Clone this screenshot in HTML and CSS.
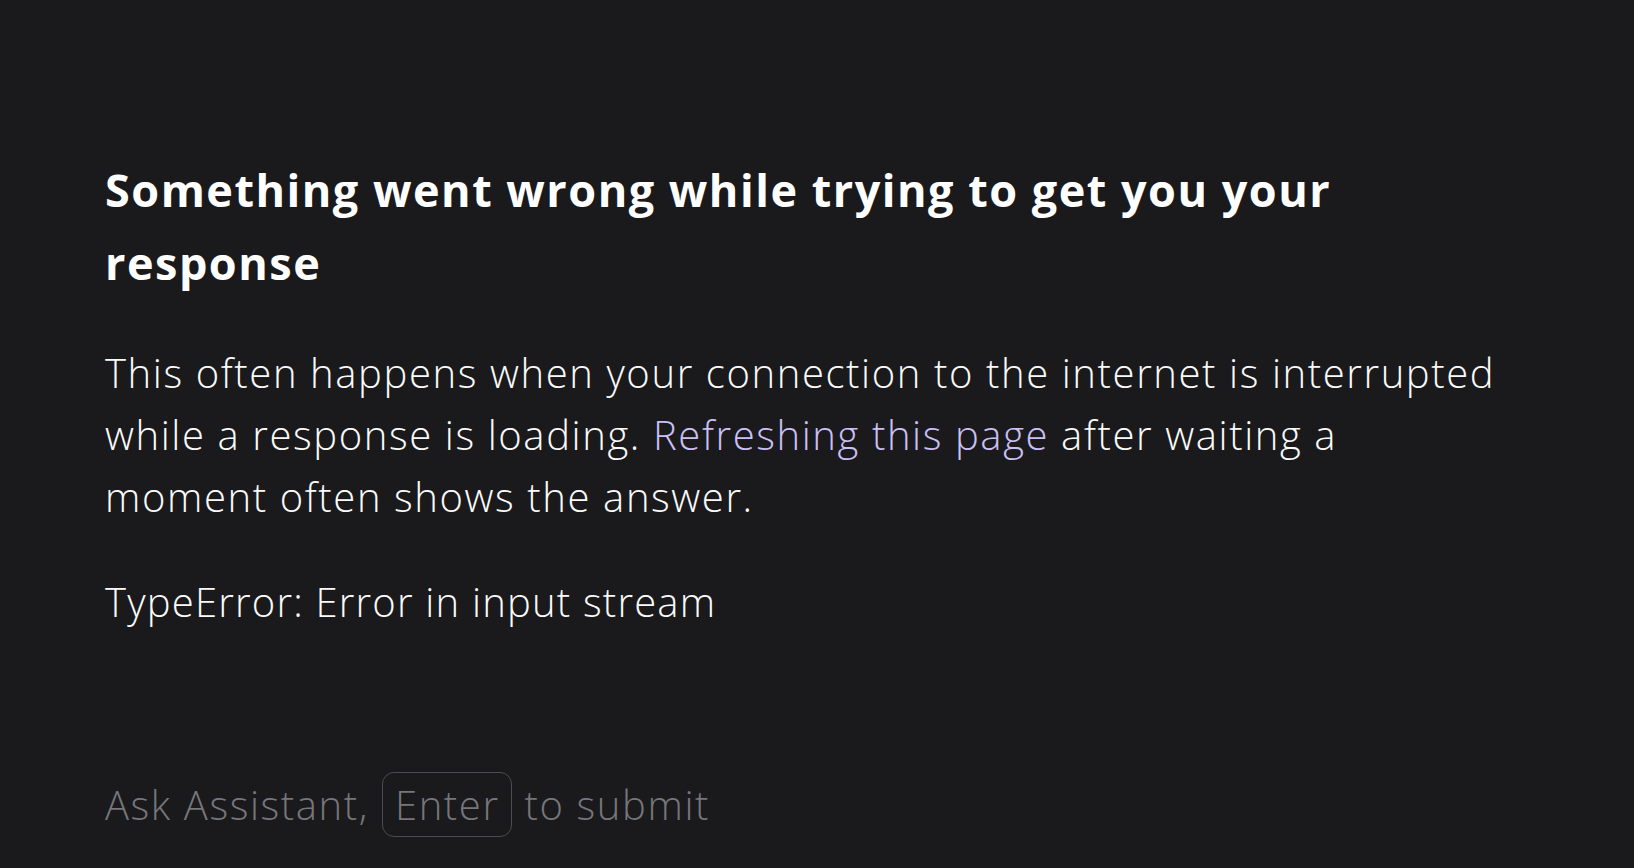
FILE: index.html
```html
<!DOCTYPE html>
<html lang="en">
<head>
<meta charset="utf-8">
<title>Assistant</title>
<link rel="stylesheet" href="styles.css">
</head>
<body>
<main class="page">
  <section class="error">
    <h1 class="error-title">Something went wrong while trying to get you your response</h1>
    <p class="error-text">This often happens when your connection to the internet is interrupted while a response is loading. <a class="error-link" href="#">Refreshing this page</a> after waiting a moment often shows the answer.</p>
    <p class="error-detail">TypeError: Error in input stream</p>
  </section>
  <div class="prompt">
    <span>Ask Assistant,</span>
    <kbd class="key">Enter</kbd>
    <span>to submit</span>
  </div>
</main>
</body>
</html>
```

FILE: styles.css
```css
html, body {
  margin: 0;
  padding: 0;
  height: 100%;
  background: #1a1a1c;
}
body {
  font-family: "Open Sans", Lato, sans-serif;
  color: #fafafa;
}
.page {
  box-sizing: border-box;
  height: 100%;
  padding: 153px 105px 0 105px;
  display: flex;
  flex-direction: column;
}
.error {
  flex: 1;
  max-width: 1395px;
}
.error-title {
  margin: 0;
  font-size: 45px;
  line-height: 73px;
  font-weight: 700;
  color: #ffffff;
  letter-spacing: 1.5px;
}
.error-text {
  margin: 43px 0 0 0;
  font-size: 40px;
  line-height: 62px;
  font-weight: 300;
  letter-spacing: 1.6px;
}
.error-link {
  color: #cbc0f6;
  text-decoration: none;
}
.error-detail {
  margin: 43px 0 0 0;
  font-size: 40px;
  line-height: 62px;
  font-weight: 300;
  letter-spacing: 1.2px;
}
.prompt {
  display: flex;
  align-items: center;
  gap: 13px;
  height: 66px;
  margin-bottom: 31px;
  font-size: 40px;
  font-weight: 300;
  color: #76767b;
  letter-spacing: 1.6px;
}
.key {
  font-family: inherit;
  box-sizing: border-box;
  height: 65px;
  display: flex;
  align-items: center;
  padding: 0 11px 0 12px;
  border: 1.5px solid #4c4c51;
  border-radius: 12px;
}
```
